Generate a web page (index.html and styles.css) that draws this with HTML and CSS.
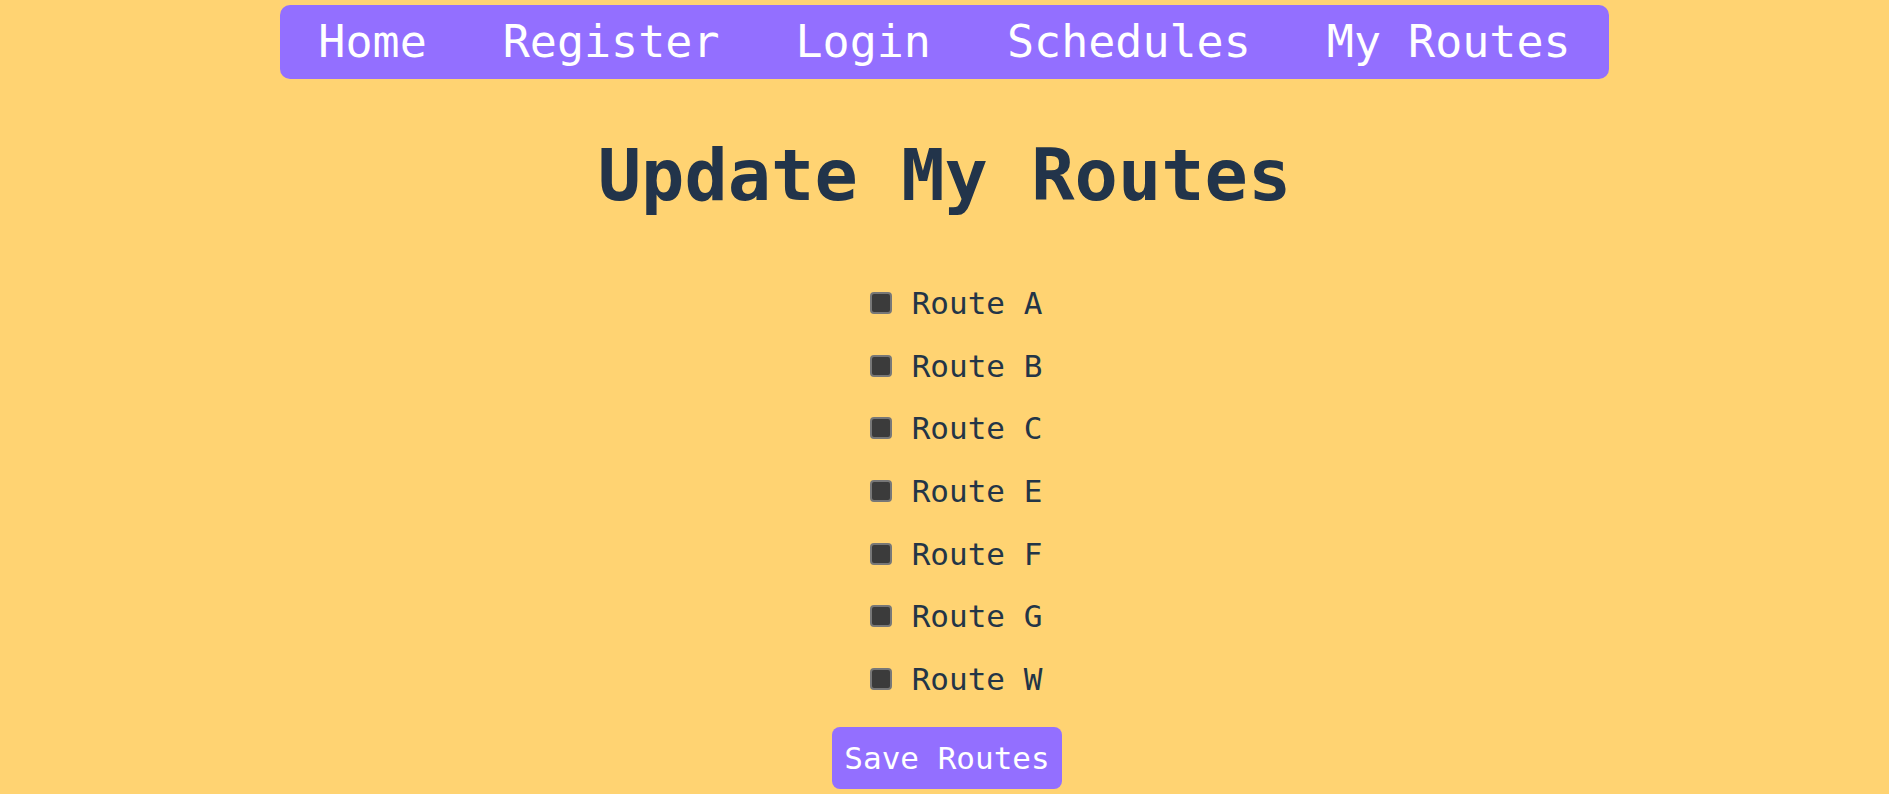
FILE: index.html
```html
<!DOCTYPE html>
<html lang="en">
<head>
<meta charset="utf-8">
<title>Update My Routes</title>
<link rel="stylesheet" href="styles.css">
</head>
<body>
<nav class="nav">
  <a class="nav-link" href="#">Home</a>
  <a class="nav-link" href="#">Register</a>
  <a class="nav-link" href="#">Login</a>
  <a class="nav-link" href="#">Schedules</a>
  <a class="nav-link" href="#">My Routes</a>
</nav>
<main class="main">
  <h1 class="title">Update My Routes</h1>
  <form class="routes">
    <label class="route"><input class="check" type="checkbox"><span>Route A</span></label>
    <label class="route"><input class="check" type="checkbox"><span>Route B</span></label>
    <label class="route"><input class="check" type="checkbox"><span>Route C</span></label>
    <label class="route"><input class="check" type="checkbox"><span>Route E</span></label>
    <label class="route"><input class="check" type="checkbox"><span>Route F</span></label>
    <label class="route"><input class="check" type="checkbox"><span>Route G</span></label>
    <label class="route"><input class="check" type="checkbox"><span>Route W</span></label>
    <button class="save" type="button">Save Routes</button>
  </form>
</main>
</body>
</html>
```
FILE: styles.css
```css
html, body {
  margin: 0;
  padding: 0;
}
body {
  background: #ffd372;
  font-family: "DejaVu Sans Mono", "Liberation Mono", monospace;
  color: #233547;
  overflow: hidden;
}
.nav {
  display: flex;
  gap: 76px;
  width: fit-content;
  margin: 5px auto 0;
  padding: 11px 38px;
  background: #936fff;
  border-radius: 10px;
}
.nav-link {
  color: #ffffff;
  text-decoration: none;
  font-size: 45px;
  line-height: 52px;
}
.main {
  display: flex;
  flex-direction: column;
  align-items: center;
}
.title {
  margin: 54px 0 0;
  font-size: 72px;
  font-weight: bold;
  line-height: 84px;
  color: #22344a;
}
.routes {
  display: flex;
  flex-direction: column;
  align-items: center;
  margin-top: 55px;
}
.route {
  display: flex;
  align-items: center;
  gap: 20px;
  height: 62.6px;
  padding-left: 23px;
  font-size: 31px;
  color: #233547;
}
.check {
  appearance: none;
  -webkit-appearance: none;
  margin: 0;
  width: 22px;
  height: 22px;
  box-sizing: border-box;
  background: #3b3b3b;
  border: 2px solid #777777;
  border-radius: 4px;
}
.save {
  margin: 17px 0 0 5px;
  padding: 13px 12px;
  font-family: inherit;
  font-size: 31px;
  line-height: 36px;
  color: #ffffff;
  background: #936fff;
  border: none;
  border-radius: 8px;
}
```
